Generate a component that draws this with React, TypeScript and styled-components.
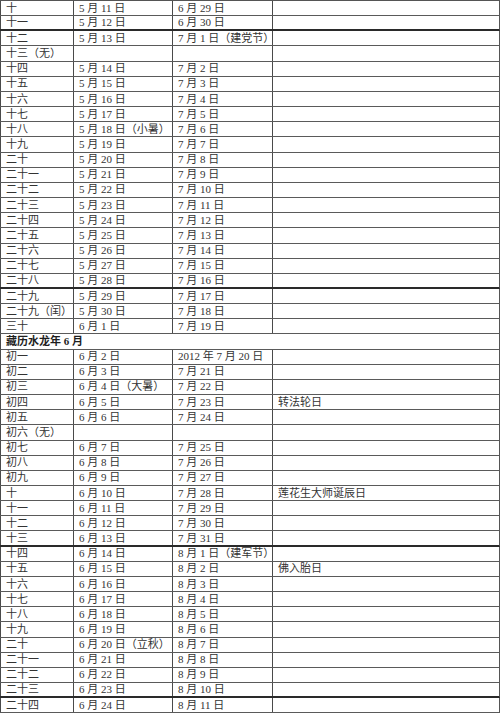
import styled, { createGlobalStyle } from "styled-components";

type Entry = {
    day: string;
    solar?: string;
    date?: string;
    note?: string;
    heavy?: boolean;
};

const GlobalStyle = createGlobalStyle`
    html, body {
        margin: 0;
        padding: 0;
        background: #ffffff;
    }
    body {
        font-family: "Liberation Serif", "Noto Sans CJK SC", serif;
        color: #333333;
    }
`;

const firstMonth: Entry[] = [
    { day: "十", solar: "5 月 11 日", date: "6 月 29 日" },
    { day: "十一", solar: "5 月 12 日", date: "6 月 30 日", heavy: true },
    { day: "十二", solar: "5 月 13 日", date: "7 月 1 日（建党节）" },
    { day: "十三（无）" },
    { day: "十四", solar: "5 月 14 日", date: "7 月 2 日" },
    { day: "十五", solar: "5 月 15 日", date: "7 月 3 日" },
    { day: "十六", solar: "5 月 16 日", date: "7 月 4 日" },
    { day: "十七", solar: "5 月 17 日", date: "7 月 5 日" },
    { day: "十八", solar: "5 月 18 日（小暑）", date: "7 月 6 日" },
    { day: "十九", solar: "5 月 19 日", date: "7 月 7 日" },
    { day: "二十", solar: "5 月 20 日", date: "7 月 8 日" },
    { day: "二十一", solar: "5 月 21 日", date: "7 月 9 日" },
    { day: "二十二", solar: "5 月 22 日", date: "7 月 10 日" },
    { day: "二十三", solar: "5 月 23 日", date: "7 月 11 日" },
    { day: "二十四", solar: "5 月 24 日", date: "7 月 12 日" },
    { day: "二十五", solar: "5 月 25 日", date: "7 月 13 日" },
    { day: "二十六", solar: "5 月 26 日", date: "7 月 14 日" },
    { day: "二十七", solar: "5 月 27 日", date: "7 月 15 日" },
    { day: "二十八", solar: "5 月 28 日", date: "7 月 16 日", heavy: true },
    { day: "二十九", solar: "5 月 29 日", date: "7 月 17 日" },
    { day: "二十九（闰）", solar: "5 月 30 日", date: "7 月 18 日" },
    { day: "三十", solar: "6 月 1 日", date: "7 月 19 日" },
];

const secondMonth: Entry[] = [
    { day: "初一", solar: "6 月 2 日", date: "2012 年 7 月 20 日" },
    { day: "初二", solar: "6 月 3 日", date: "7 月 21 日" },
    { day: "初三", solar: "6 月 4 日（大暑）", date: "7 月 22 日" },
    { day: "初四", solar: "6 月 5 日", date: "7 月 23 日", note: "转法轮日" },
    { day: "初五", solar: "6 月 6 日", date: "7 月 24 日" },
    { day: "初六（无）" },
    { day: "初七", solar: "6 月 7 日", date: "7 月 25 日" },
    { day: "初八", solar: "6 月 8 日", date: "7 月 26 日" },
    { day: "初九", solar: "6 月 9 日", date: "7 月 27 日" },
    { day: "十", solar: "6 月 10 日", date: "7 月 28 日", note: "莲花生大师诞辰日" },
    { day: "十一", solar: "6 月 11 日", date: "7 月 29 日" },
    { day: "十二", solar: "6 月 12 日", date: "7 月 30 日" },
    { day: "十三", solar: "6 月 13 日", date: "7 月 31 日", heavy: true },
    { day: "十四", solar: "6 月 14 日", date: "8 月 1 日（建军节）" },
    { day: "十五", solar: "6 月 15 日", date: "8 月 2 日", note: "佛入胎日" },
    { day: "十六", solar: "6 月 16 日", date: "8 月 3 日" },
    { day: "十七", solar: "6 月 17 日", date: "8 月 4 日" },
    { day: "十八", solar: "6 月 18 日", date: "8 月 5 日" },
    { day: "十九", solar: "6 月 19 日", date: "8 月 6 日" },
    { day: "二十", solar: "6 月 20 日（立秋）", date: "8 月 7 日" },
    { day: "二十一", solar: "6 月 21 日", date: "8 月 8 日" },
    { day: "二十二", solar: "6 月 22 日", date: "8 月 9 日" },
    { day: "二十三", solar: "6 月 23 日", date: "8 月 10 日", heavy: true },
    { day: "二十四", solar: "6 月 24 日", date: "8 月 11 日" },
];

const Sheet = styled.div`
    width: 500px;
    border-top: 1px solid #555555;
    box-sizing: border-box;
`;

const Row = styled.div<{ $heavy?: boolean }>`
    display: grid;
    grid-template-columns: 73px 99px 100px 227px;
    height: 15.16px;
    box-sizing: border-box;
    border-right: 1px solid #555555;
    border-bottom: ${({ $heavy }) =>
        $heavy ? "2px solid #2a2a2a" : "1px solid #5a5a5a"};
`;

const Cell = styled.div`
    display: flex;
    align-items: center;
    padding-left: 5px;
    border-left: 1px solid #4a4a4a;
    font-size: 11px;
    line-height: 1;
    white-space: nowrap;
    overflow: visible;
    min-width: 0;
`;

const MonthRow = styled.div`
    display: flex;
    align-items: center;
    height: 15.16px;
    box-sizing: border-box;
    padding-left: 5px;
    border-left: 1px solid #4a4a4a;
    border-right: 1px solid #555555;
    border-bottom: 1px solid #5a5a5a;
    font-size: 11px;
    font-weight: bold;
    color: #1e1e1e;
    line-height: 1;
`;

const DayRow = ({ entry }: { entry: Entry }) => (
    <Row $heavy={entry.heavy}>
        <Cell>{entry.day}</Cell>
        <Cell>{entry.solar}</Cell>
        <Cell>{entry.date}</Cell>
        <Cell>{entry.note}</Cell>
    </Row>
);

const App = () => {
    return (
        <>
            <GlobalStyle />
            <Sheet>
                {firstMonth.map((entry, i) => (
                    <DayRow key={"a" + i} entry={entry} />
                ))}
                <MonthRow>藏历水龙年 6 月</MonthRow>
                {secondMonth.map((entry, i) => (
                    <DayRow key={"b" + i} entry={entry} />
                ))}
            </Sheet>
        </>
    );
};

export default App;
